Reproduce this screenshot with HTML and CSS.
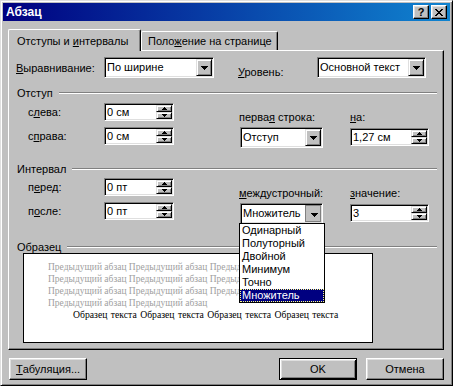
FILE: index.html
```html
<!DOCTYPE html>
<html lang="ru">
<head>
<meta charset="utf-8">
<title>Абзац</title>
<link rel="stylesheet" href="styles.css">
</head>
<body>
<div class="window">
  <div class="titlebar">
    <span class="title">Абзац</span>
    <div class="tb-buttons">
      <span class="tb-btn help">?</span>
      <span class="tb-btn"><svg width="8" height="7" viewBox="0 0 8 7" shape-rendering="crispEdges"><path d="M0 0h2v1H0z M6 0h2v1H6z M1 1h2v1H1z M5 1h2v1H5z M2 2h4v1H2z M3 3h2v1H3z M2 4h4v1H2z M1 5h2v1H1z M5 5h2v1H5z M0 6h2v1H0z M6 6h2v1H6z"/></svg></span>
    </div>
  </div>
  <div class="client">
    <div class="tabs">
      <div class="tab active">Отступы и <u>и</u>нтервалы</div>
      <div class="tab">Поло<u>ж</u>ение на странице</div>
    </div>
    <div class="panel">
      <div class="row-top">
        <span class="lbl-main"><u>В</u>ыравнивание:</span>
        <div class="combo w110"><span class="val">По ширине</span><span class="dd-btn"><svg width="7" height="4" viewBox="0 0 7 4" shape-rendering="crispEdges"><path d="M0 0h7v1H6v1H5v1H4v1H3V3H2V2H1V1H0z"/></svg></span></div>
        <span class="lbl-level"><u>У</u>ровень:</span>
        <div class="combo w109"><span class="val">Основной текст</span><span class="dd-btn"><svg width="7" height="4" viewBox="0 0 7 4" shape-rendering="crispEdges"><path d="M0 0h7v1H6v1H5v1H4v1H3V3H2V2H1V1H0z"/></svg></span></div>
      </div>

      <div class="group g-indent"><span class="g-title">Отступ</span><span class="etch"></span></div>
      <div class="section">
        <div class="col-left">
          <div class="field-row"><span class="lbl-sub">с<u>л</u>ева:</span>
            <div class="spin"><span class="val">0 см</span><span class="spin-btns"><span class="sb"><svg width="5" height="3" viewBox="0 0 5 3" shape-rendering="crispEdges"><path d="M2 0h1v1h1v1h1v1H0V2h1V1h1z"/></svg></span><span class="sb"><svg width="5" height="3" viewBox="0 0 5 3" shape-rendering="crispEdges"><path d="M0 0h5v1H4v1H3v1H2V2H1V1H0z"/></svg></span></span></div>
          </div>
          <div class="field-row second"><span class="lbl-sub">с<u>п</u>рава:</span>
            <div class="spin"><span class="val">0 см</span><span class="spin-btns"><span class="sb"><svg width="5" height="3" viewBox="0 0 5 3" shape-rendering="crispEdges"><path d="M2 0h1v1h1v1h1v1H0V2h1V1h1z"/></svg></span><span class="sb"><svg width="5" height="3" viewBox="0 0 5 3" shape-rendering="crispEdges"><path d="M0 0h5v1H4v1H3v1H2V2H1V1H0z"/></svg></span></span></div>
          </div>
        </div>
        <div class="col-right pt8">
          <div class="sub sub1">
            <span class="lbl-top">перва<u>я</u> строка:</span>
            <div class="combo w83"><span class="val">Отступ</span><span class="dd-btn"><svg width="7" height="4" viewBox="0 0 7 4" shape-rendering="crispEdges"><path d="M0 0h7v1H6v1H5v1H4v1H3V3H2V2H1V1H0z"/></svg></span></div>
          </div>
          <div class="sub">
            <span class="lbl-top"><u>н</u>а:</span>
            <div class="spin w79"><span class="val">1,27 см</span><span class="spin-btns"><span class="sb"><svg width="5" height="3" viewBox="0 0 5 3" shape-rendering="crispEdges"><path d="M2 0h1v1h1v1h1v1H0V2h1V1h1z"/></svg></span><span class="sb"><svg width="5" height="3" viewBox="0 0 5 3" shape-rendering="crispEdges"><path d="M0 0h5v1H4v1H3v1H2V2H1V1H0z"/></svg></span></span></div>
          </div>
        </div>
      </div>

      <div class="group g-interval"><span class="g-title">Интервал</span><span class="etch"></span></div>
      <div class="section">
        <div class="col-left">
          <div class="field-row"><span class="lbl-sub">п<u>е</u>ред:</span>
            <div class="spin"><span class="val">0 пт</span><span class="spin-btns"><span class="sb"><svg width="5" height="3" viewBox="0 0 5 3" shape-rendering="crispEdges"><path d="M2 0h1v1h1v1h1v1H0V2h1V1h1z"/></svg></span><span class="sb"><svg width="5" height="3" viewBox="0 0 5 3" shape-rendering="crispEdges"><path d="M0 0h5v1H4v1H3v1H2V2H1V1H0z"/></svg></span></span></div>
          </div>
          <div class="field-row second"><span class="lbl-sub">п<u>о</u>сле:</span>
            <div class="spin"><span class="val">0 пт</span><span class="spin-btns"><span class="sb"><svg width="5" height="3" viewBox="0 0 5 3" shape-rendering="crispEdges"><path d="M2 0h1v1h1v1h1v1H0V2h1V1h1z"/></svg></span><span class="sb"><svg width="5" height="3" viewBox="0 0 5 3" shape-rendering="crispEdges"><path d="M0 0h5v1H4v1H3v1H2V2H1V1H0z"/></svg></span></span></div>
          </div>
        </div>
        <div class="col-right pt9">
          <div class="sub sub1">
            <span class="lbl-top"><u>м</u>еждустрочный:</span>
            <div class="combo-wrap">
              <div class="combo w83 open"><span class="val">Множитель</span><span class="dd-btn pressed"><svg width="7" height="4" viewBox="0 0 7 4" shape-rendering="crispEdges"><path d="M0 0h7v1H6v1H5v1H4v1H3V3H2V2H1V1H0z"/></svg></span></div>
              <ul class="dropdown">
                <li>Одинарный</li>
                <li>Полуторный</li>
                <li>Двойной</li>
                <li>Минимум</li>
                <li>Точно</li>
                <li class="sel">Множитель</li>
              </ul>
            </div>
          </div>
          <div class="sub">
            <span class="lbl-top"><u>з</u>начение:</span>
            <div class="spin w79"><span class="val">3</span><span class="spin-btns"><span class="sb"><svg width="5" height="3" viewBox="0 0 5 3" shape-rendering="crispEdges"><path d="M2 0h1v1h1v1h1v1H0V2h1V1h1z"/></svg></span><span class="sb"><svg width="5" height="3" viewBox="0 0 5 3" shape-rendering="crispEdges"><path d="M0 0h5v1H4v1H3v1H2V2H1V1H0z"/></svg></span></span></div>
          </div>
        </div>
      </div>

      <div class="group g-sample"><span class="g-title">Образец</span><span class="etch"></span></div>
      <div class="preview">
        <div class="prev-line">Предыдущий абзац Предыдущий абзац Предыдущий абзац</div>
        <div class="prev-line">Предыдущий абзац Предыдущий абзац Предыдущий абзац</div>
        <div class="prev-line">Предыдущий абзац Предыдущий абзац Предыдущий абзац</div>
        <div class="prev-line">Предыдущий абзац Предыдущий абзац</div>
        <div class="sample-line">Образец текста Образец текста Образец текста Образец текста</div>
      </div>
    </div>
    <div class="actions">
      <span class="btn"><u>Т</u>абуляция...</span>
      <span class="btn default push">OK</span>
      <span class="btn">Отмена</span>
    </div>
  </div>
</div>
</body>
</html>
```
FILE: styles.css
```css
* { box-sizing: border-box; }
body {
  margin: 0;
  background: #c0c0c0;
  font: 11px "Liberation Sans", Arial, sans-serif;
  color: #000;
}
u { text-decoration: underline; text-underline-offset: 1px; }

.window {
  width: 453px;
  height: 386px;
  padding: 2px;
  background: #c0c0c0;
  border: 1px solid;
  border-color: #dfdfdf #000 #000 #dfdfdf;
  box-shadow: inset 1px 1px #fff, inset -1px -1px #808080;
}

.titlebar {
  height: 18px;
  display: flex;
  align-items: center;
  justify-content: space-between;
  padding: 0 3px 0 3px;
  background: linear-gradient(90deg, #000080, #1084d0);
  color: #fff;
}
.title { font-weight: bold; font-size: 12px; }
.tb-buttons { display: flex; gap: 2px; }
.tb-btn {
  width: 16px;
  height: 14px;
  display: flex;
  align-items: center;
  justify-content: center;
  background: #c0c0c0;
  color: #000;
  border: 1px solid;
  border-color: #fff #000 #000 #fff;
  box-shadow: inset -1px -1px #808080, inset 1px 1px #dfdfdf;
}
.tb-btn.help { font-weight: bold; font-size: 11px; line-height: 1; }

.client { padding: 8px 6px 0 5px; }

.tabs {
  display: flex;
  align-items: flex-end;
  height: 22px;
  margin-bottom: -1px;
  position: relative;
  z-index: 2;
}
.tab {
  background: #c0c0c0;
  border: 1px solid;
  border-bottom: none;
  border-color: #fff #000 #000 #fff;
  box-shadow: inset -1px 0 #808080;
  border-radius: 2px 2px 0 0;
  height: 19px;
  margin-bottom: 1px;
  width: 137px;
  padding: 3px 0 0 6px;
  white-space: nowrap;
}
.tab.active {
  height: 22px;
  width: 133px;
  margin-bottom: 0;
  padding: 5px 0 0 8px;
}

.panel {
  height: 300px;
  border: 1px solid;
  border-color: #fff #000 #000 #fff;
  box-shadow: inset -1px -1px #808080;
  padding: 6px 6px 0 7px;
}

.row-top { display: flex; height: 21px; }
.lbl-main { width: 88px; line-height: 22px; }
.lbl-level { width: 79px; margin-left: 24px; margin-top: 9px; line-height: 13px; }

.combo, .spin {
  display: flex;
  background: #fff;
  border: 1px solid;
  border-color: #808080 #fff #fff #808080;
  box-shadow: inset 1px 1px #000, inset -1px -1px #dfdfdf;
  padding: 1px;
}
.combo { height: 21px; }
.spin { height: 18px; width: 70px; }
.w110 { width: 110px; }
.w109 { width: 109px; }
.w83 { width: 83px; }
.w79 { width: 79px; }
.val {
  flex: 1;
  padding-left: 1px;
  white-space: nowrap;
  overflow: hidden;
}
.combo .val { line-height: 17px; }
.spin .val { line-height: 14px; }

.dd-btn {
  width: 16px;
  height: 17px;
  display: flex;
  align-items: center;
  justify-content: center;
  background: #c0c0c0;
  border: 1px solid;
  border-color: #dfdfdf #000 #000 #dfdfdf;
  box-shadow: inset 1px 1px #fff, inset -1px -1px #808080;
}
.dd-btn.pressed {
  border-color: #808080;
  box-shadow: none;
  padding: 2px 0 0 2px;
}

.spin-btns { display: flex; flex-direction: column; width: 16px; }
.sb {
  height: 7px;
  display: flex;
  align-items: center;
  justify-content: center;
  background: #c0c0c0;
  border: 1px solid;
  border-color: #dfdfdf #000 #000 #dfdfdf;
  box-shadow: inset 1px 1px #fff, inset -1px -1px #808080;
}
.sb svg { display: block; }

.group {
  display: flex;
  align-items: center;
  height: 13px;
  padding-left: 1px;
}
.g-indent { margin-top: 8px; }
.g-interval { margin-top: 14px; }
.g-sample { margin-top: 17px; height: 12px; }
.etch {
  flex: 1;
  height: 2px;
  margin-left: 6px;
  border-top: 1px solid #808080;
  border-bottom: 1px solid #fff;
}

.section { display: flex; margin-top: 4px; }
.g-interval + .section { margin-top: 3px; }
.col-left { width: 223px; padding-left: 12px; }
.field-row { display: flex; align-items: center; height: 18px; }
.field-row.second { margin-top: 6px; }
.lbl-sub { width: 76px; }

.col-right { display: flex; }
.pt8 { padding-top: 8px; }
.pt9 { padding-top: 9px; }
.sub { display: flex; flex-direction: column; }
.sub1 { width: 111px; }
.sub1 .combo { margin-left: 1px; }
.lbl-top { line-height: 13px; margin-bottom: 3px; }
.sub .spin { margin-top: 1px; }

.combo-wrap { position: relative; }
.dropdown {
  position: absolute;
  top: 20px;
  left: 0;
  z-index: 5;
  width: 86px;
  margin: 0;
  padding: 0;
  list-style: none;
  background: #fff;
  border: 1px solid #000;
}
.dropdown li {
  height: 13px;
  line-height: 13px;
  padding-left: 2px;
  white-space: nowrap;
}
.dropdown li.sel {
  background: #000080;
  color: #fff;
  outline: 1px dotted #ffff80;
  outline-offset: -1px;
}

.preview {
  width: 350px;
  height: 90px;
  margin-left: 7px;
  background: #fff;
  border: 1px solid #000;
  padding: 7px 0 0 24px;
  overflow: hidden;
  white-space: nowrap;
  font-family: "Liberation Serif", "Times New Roman", serif;
}
.prev-line {
  font-size: 9.5px;
  line-height: 12px;
  color: #a0a0a0;
}
.sample-line {
  font-size: 9.7px;
  line-height: 12px;
  text-indent: 25px;
  word-spacing: 1px;
}

.actions {
  display: flex;
  margin-top: 8px;
  padding-left: 1px;
}
.btn {
  width: 78px;
  height: 22px;
  display: flex;
  align-items: center;
  justify-content: center;
  background: #c0c0c0;
  border: 1px solid;
  border-color: #fff #000 #000 #fff;
  box-shadow: inset -1px -1px #808080, inset 1px 1px #dfdfdf;
}
.btn + .btn { margin-left: 9px; }
.btn.push { margin-left: auto; }
.btn.default {
  border-color: #000;
  box-shadow: inset 1px 1px #fff, inset -1px -1px #000, inset 2px 2px #dfdfdf, inset -2px -2px #808080;
}
```
